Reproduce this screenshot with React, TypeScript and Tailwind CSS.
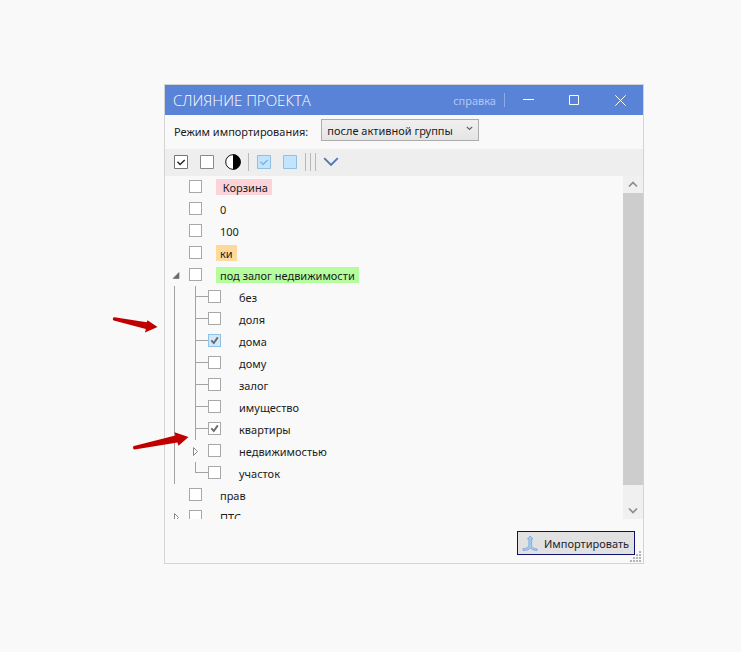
import { useState } from 'react'
import clsx from 'clsx'

interface TreeItem {
  id: string
  label: string
  chip?: string
  active?: boolean
  state?: 'open' | 'closed'
  children?: TreeItem[]
}

const items: TreeItem[] = [
  { id: 'trash', label: ' Корзина', chip: 'bg-[#fbd3d9]' },
  { id: 'zero', label: '0' },
  { id: 'hundred', label: '100' },
  { id: 'ki', label: 'ки', chip: 'bg-[#fdd99b]' },
  {
    id: 'realty',
    label: 'под залог недвижимости',
    chip: 'bg-[#b5fc9e]',
    state: 'open',
    children: [
      { id: 'bez', label: 'без' },
      { id: 'dolya', label: 'доля' },
      { id: 'doma', label: 'дома', active: true },
      { id: 'domu', label: 'дому' },
      { id: 'zalog', label: 'залог' },
      { id: 'imushestvo', label: 'имущество' },
      { id: 'kvartiry', label: 'квартиры' },
      { id: 'nedv', label: 'недвижимостью', state: 'closed' },
      { id: 'uchastok', label: 'участок' },
    ],
  },
  { id: 'prav', label: 'прав' },
  { id: 'pts', label: 'ПТС', state: 'closed' },
]

function Expander({ state }: { state: 'open' | 'closed' }) {
  return (
    <button type="button" aria-label={state === 'open' ? 'Свернуть' : 'Развернуть'} className="block">
      <svg width="9" height="11" viewBox="0 0 9 11" fill="none">
        {state === 'open' ? (
          <path d="M7 2.5v6h-6z" fill="#6a6a6a" stroke="#6a6a6a" strokeWidth="0.6" />
        ) : (
          <path d="M2.5 1.5v8l4-4z" fill="#fff" stroke="#8a8a8a" />
        )}
      </svg>
    </button>
  )
}

interface TreeCheckboxProps {
  id: string
  active?: boolean
  checked: boolean
  onChange: () => void
}

function TreeCheckbox({ id, active, checked, onChange }: TreeCheckboxProps) {
  return (
    <span className="mt-1 grid shrink-0 self-start">
      <input
        id={id}
        type="checkbox"
        checked={checked}
        onChange={onChange}
        className={clsx(
          'col-start-1 row-start-1 size-[13px] appearance-none border',
          active ? 'border-[#8fc0e6] bg-[#cfe8fb]' : 'border-[#a8a8a8] bg-white'
        )}
      />
      {checked && (
        <svg className="pointer-events-none col-start-1 row-start-1" width="13" height="13" viewBox="0 0 13 13" fill="none">
          <path d="M3.3 6.3l2.5 2.7 4-5.6" stroke="#6b6b6b" strokeWidth="1.9" />
        </svg>
      )}
    </span>
  )
}

function ItemLabel({ item }: { item: TreeItem }) {
  return (
    <label htmlFor={item.id} className={clsx('ml-3.5 px-1 pt-0.5 leading-3.5 whitespace-pre', item.chip)}>
      {item.label}
    </label>
  )
}

function Connector({ last }: { last: boolean }) {
  return (
    <span className="flex w-[13px] shrink-0 flex-col self-stretch">
      <span className="h-[11px] border-b border-l border-[#a3a3a3]"></span>
      {!last && <span className="grow border-l border-[#a3a3a3]"></span>}
    </span>
  )
}

function Tree() {
  const [checked, setChecked] = useState<string[]>(['doma', 'kvartiry'])

  const toggle = (id: string) =>
    setChecked(checked.includes(id) ? checked.filter((c) => c !== id) : [...checked, id])

  return (
    <ul className="h-[343px] grow overflow-hidden">
      {items.map((item) => (
        <li key={item.id}>
          <div className="flex h-[22px] items-center">
            <span className="w-6 shrink-0 pl-[7px]">{item.state && <Expander state={item.state} />}</span>
            <TreeCheckbox id={item.id} checked={checked.includes(item.id)} onChange={() => toggle(item.id)} />
            <ItemLabel item={item} />
          </div>
          {item.children && (
            <ul className="ml-[9px] border-l border-[#a3a3a3]">
              {item.children.map((child, i) => (
                <li key={child.id} className="flex h-[22px] items-center pl-5">
                  {child.state ? (
                    <span className="-ml-1 w-[17px] shrink-0">
                      <Expander state={child.state} />
                    </span>
                  ) : (
                    <Connector last={i === item.children!.length - 1} />
                  )}
                  <TreeCheckbox
                    id={child.id}
                    active={child.active}
                    checked={checked.includes(child.id)}
                    onChange={() => toggle(child.id)}
                  />
                  <ItemLabel item={child} />
                </li>
              ))}
            </ul>
          )}
        </li>
      ))}
    </ul>
  )
}

function TitleBar() {
  return (
    <header className="flex h-[30px] items-center bg-[#5983d6] pl-2 text-white">
      <h1 className="grow font-['Open_Sans',sans-serif] text-[15px] leading-5 font-light">СЛИЯНИЕ ПРОЕКТА</h1>
      <a href="#help" className="pt-0.5 leading-3.5 text-[#b3c8f3]">
        справка
      </a>
      <span className="ml-2 h-3.5 w-px bg-[#8fabe6]"></span>
      <button type="button" aria-label="Свернуть окно" className="flex w-[46px] justify-center">
        <svg width="11" height="11" viewBox="0 0 11 11" stroke="currentColor">
          <path d="M0 4.5h11" />
        </svg>
      </button>
      <button type="button" aria-label="Развернуть окно" className="flex w-[46px] justify-center">
        <svg width="10" height="10" viewBox="0 0 10 10" fill="none" stroke="currentColor">
          <path d="M.5 .5h9v9H.5z" />
        </svg>
      </button>
      <button type="button" aria-label="Закрыть" className="flex w-[46px] justify-center">
        <svg width="11" height="11" viewBox="0 0 11 11" stroke="currentColor">
          <path d="M.3 .3l10.4 10.4M10.7 .3L.3 10.7" />
        </svg>
      </button>
    </header>
  )
}

function Toolbar() {
  return (
    <div className="flex h-[27px] items-center bg-[#eeeeee] pb-0.5 pl-2">
      <button type="button" aria-label="Отметить все">
        <svg width="16" height="16" viewBox="0 0 16 16" fill="none">
          <path d="M1.5 1.5h13v13h-13z" fill="#fff" stroke="#767676" />
          <path d="M4.5 7.7l2.6 2.8 4.6-4.6" stroke="#222" strokeWidth="1.4" />
        </svg>
      </button>
      <button type="button" aria-label="Снять все" className="ml-2.5">
        <svg width="16" height="16" viewBox="0 0 16 16" fill="none">
          <path d="M1.5 1.5h13v13h-13z" fill="#fff" stroke="#8a8a8a" />
        </svg>
      </button>
      <button type="button" aria-label="Инвертировать" className="ml-2.5">
        <svg width="16" height="16" viewBox="0 0 16 16">
          <circle cx="8" cy="8" r="7.3" fill="#fff" stroke="#111" />
          <path d="M8 .3a7.7 7.7 0 0 1 0 15.4z" fill="#000" />
        </svg>
      </button>
      <span className="ml-[7px] h-[18px] w-px bg-[#b8b8b8]"></span>
      <button type="button" aria-label="Отметить выделенные" className="ml-[7px]">
        <svg width="16" height="16" viewBox="0 0 16 16" fill="none">
          <path d="M1.5 1.5h13v13h-13z" fill="#c2e5ff" stroke="#90bfe0" />
          <path d="M4.5 7.7l2.6 2.8 4.6-4.6" stroke="#7fb2d9" strokeWidth="1.4" />
        </svg>
      </button>
      <button type="button" aria-label="Снять выделенные" className="ml-2.5">
        <svg width="16" height="16" viewBox="0 0 16 16" fill="none">
          <path d="M1.5 1.5h13v13h-13z" fill="#c2e5ff" stroke="#90bfe0" />
        </svg>
      </button>
      <span className="ml-[7px] flex h-[18px] w-[11px] justify-between">
        <span className="w-px bg-[#b8b8b8]"></span>
        <span className="w-px bg-[#b8b8b8]"></span>
        <span className="w-px bg-[#b8b8b8]"></span>
      </span>
      <button type="button" aria-label="Ещё" className="ml-[7px]">
        <svg width="16" height="10" viewBox="0 0 16 10" fill="none">
          <path d="M1.2 1.2L8 8l6.8-6.8" stroke="#4f78b0" strokeWidth="1.9" />
        </svg>
      </button>
    </div>
  )
}

function ScrollBar() {
  return (
    <div className="flex w-5 shrink-0 flex-col bg-[#f0f0f0]">
      <button type="button" aria-label="Вверх" className="flex h-[17px] items-center justify-center">
        <svg width="10" height="7" viewBox="0 0 10 7" fill="none">
          <path d="M1 5.5l4-4 4 4" stroke="#8c8c8c" strokeWidth="1.7" />
        </svg>
      </button>
      <div className="grow bg-[#cdcdcd]"></div>
      <button type="button" aria-label="Вниз" className="flex h-[34px] items-end justify-center pb-[5px]">
        <svg width="10" height="7" viewBox="0 0 10 7" fill="none">
          <path d="M1 1.5l4 4 4-4" stroke="#8c8c8c" strokeWidth="1.7" />
        </svg>
      </button>
    </div>
  )
}

function Footer() {
  return (
    <footer className="relative flex h-11 items-center justify-end pr-2">
      <button
        type="button"
        className="mt-1 flex h-6 items-center gap-1.5 border border-[#0f0f6e] bg-[#e1e1e1] pr-[5px] pl-1 text-[#1e1e2e]"
      >
        <svg width="16" height="17" viewBox="0 0 16 17" fill="none" strokeLinejoin="round">
          <path
            d="M8.200 1L5.400 4h1.500v5.500c0 2.700-1.900 3.900-5.900 4.200v1.800c4 0 6.300-.8 7.400-2.800 1 1.800 3 2.700 6.600 2.800v-1.700c-3.800-.3-5.400-1.600-5.400-4.300V4H11z"
            fill="#a3cbef"
            stroke="#6f9fd6"
            strokeWidth="0.7"
          />
        </svg>
        <span className="pt-0.5 leading-3.5">Импортировать</span>
      </button>
      <svg className="absolute right-0 bottom-0" width="13" height="13" viewBox="0 0 13 13" fill="#b4b4b4">
        <path d="M9 1h2v2H9zM6 4h2v2H6zM9 4h2v2H9zM3 7h2v2H3zM6 7h2v2H6zM9 7h2v2H9zM0 10h2v2H0zM3 10h2v2H3zM6 10h2v2H6zM9 10h2v2H9z" />
      </svg>
    </footer>
  )
}

export default function App() {
  return (
    <main className="min-h-screen bg-[#f9f9f9] pt-21 pr-[97px] pb-21 pl-41 font-['Noto_Sans','Open_Sans',sans-serif] text-[11px] text-[#1b1b1b]">
      <section className="relative border border-[#d4d4d4]">
        <TitleBar />
        <div className="flex h-[34px] items-center gap-[13px] pl-[9px]">
          <label htmlFor="mode" className="leading-3.5">
            Режим импортирования:
          </label>
          <span className="mb-1 grid items-center">
            <select
              id="mode"
              className="col-start-1 row-start-1 h-[22px] w-[158px] appearance-none border border-[#acacac] bg-linear-to-b from-[#f0f0f0] to-[#e5e5e5] pt-0.5 pl-[5px]"
            >
              <option>после активной группы</option>
            </select>
            <svg
              className="pointer-events-none col-start-1 row-start-1 mr-1.5 mb-1 justify-self-end"
              width="7"
              height="5"
              viewBox="0 0 7 5"
              fill="none"
            >
              <path d="M.8 .8l2.7 2.7 2.7-2.7" stroke="#606060" strokeWidth="1.2" />
            </svg>
          </span>
        </div>
        <Toolbar />
        <div className="flex">
          <Tree />
          <ScrollBar />
        </div>
        <Footer />

        {/* Red pointer arrows */}
        <svg className="pointer-events-none absolute top-[231px] -left-[53px]" width="46" height="18" viewBox="0 0 46 18">
          <path d="M2.5 1.300C.8 1 .2 4 1.800 4.500L33.800 13l-.8 3.400 12.500-5.300L35.500 4.300l-.8 2z" fill="#c00000" />
        </svg>
        <svg className="pointer-events-none absolute top-[346px] -left-[33px]" width="58" height="20" viewBox="0 0 58 20">
          <path d="M2 15C.4 15.400 1 18.700 2.600 18.500L45.500 11.500l1 3.300L56.500 6 42.500 1.200l.8 3.200z" fill="#c00000" />
        </svg>
      </section>
    </main>
  )
}
